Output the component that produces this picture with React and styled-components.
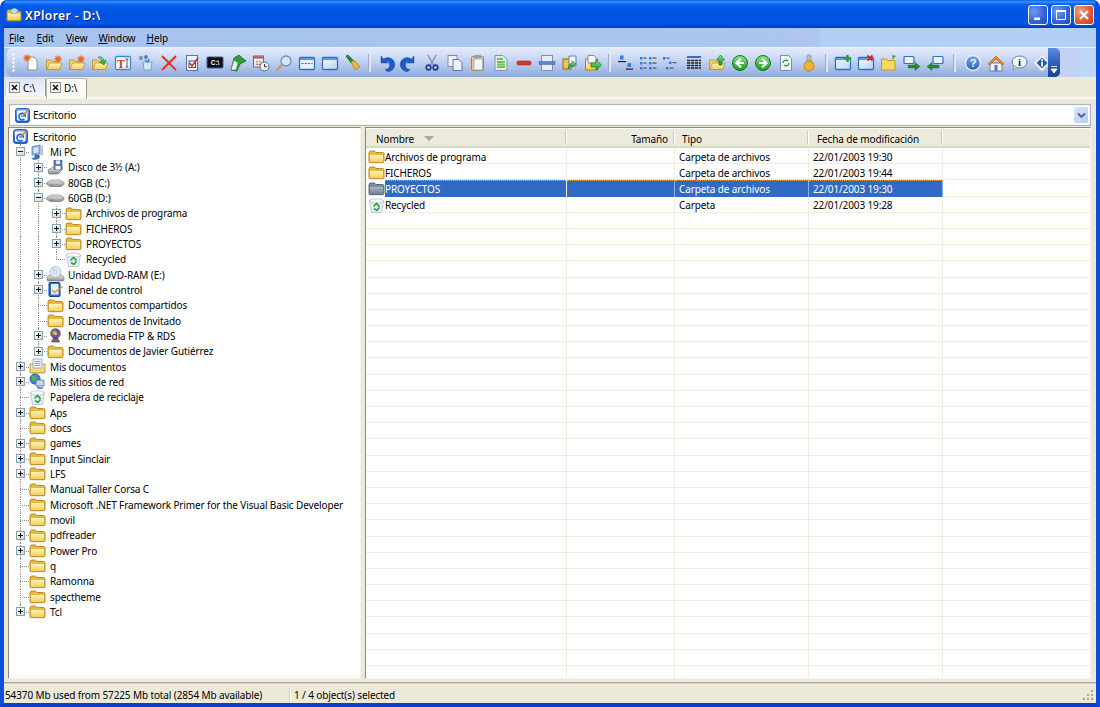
import React from 'react';
import styled, { createGlobalStyle } from 'styled-components';

const Global = createGlobalStyle`
  html, body { margin: 0; padding: 0; background: #fff; }
  body { font-family: "Noto Sans", "Open Sans", sans-serif; font-size: 10px; letter-spacing: -.12px; color: #000; }
  * { box-sizing: border-box; }
`;

const Frame = styled.div`
  width: 1100px; height: 707px; display: flex; flex-direction: column; overflow: hidden;
  border-radius: 7px 7px 0 0; background: #0a53dd;
  border: solid #0a50dc; border-width: 0 4px 4px; border-bottom-color: #0a3fd0;
`;
const TitleBar = styled.div`
  height: 28px; margin: 0 -4px; padding: 2px 6px 0 6px; flex: none; display: flex; align-items: center; gap: 3px;
  background: linear-gradient(180deg, #0a5fe8 0, #3d95ff 2px, #0a62ee 4px, #0058e6 9px, #0054e3 16px, #0058e8 23px, #0148d2 26px, #003bb0 28px);
`;
const TitleText = styled.span`
  flex: 1; color: #fff; font-size: 12.2px; font-weight: 600; letter-spacing: .35px; text-shadow: 1px 1px #0f1089;
`;
const WinBtn = styled.button`
  width: 20px; height: 20px; padding: 0; margin-top: -1px; border: 1px solid #fff; border-radius: 3px;
  display: flex; align-items: center; justify-content: center;
  background: ${p => p.$close
    ? 'radial-gradient(circle at 30% 30%, #f0a080, #dc5a34 60%, #c23a17)'
    : 'radial-gradient(circle at 30% 30%, #6f9cf0, #2f62d8 60%, #1f4dc4)'};
`;
const MenuBar = styled.div`
  height: 19px; flex: none; display: flex; align-items: center; padding-left: 5px;
  background: linear-gradient(90deg, #a7c3f0 0, #a9c4f1 740px, #afc5f2 815px, #b2d0f6 816px, #b2d0f6 100%);
`;
const MenuItem = styled.span`
  margin-right: ${p => p.$gap}px;
  &::first-letter { text-decoration: underline; }
`;
const ToolBand = styled.div`
  height: 30px; flex: none; display: flex; border-top: 1px solid #edf3fd; padding-left: 3px;
  background: linear-gradient(90deg, #b0c8f0 0, #c3d1f7 1060px, #c3d1f7 1074px, #bfd8f8 1075px);
`;
const ToolBar = styled.div`
  width: 1053px; height: 29px; display: flex; align-items: center; padding-left: 1px; position: relative;
  border-radius: 5px;
  background: linear-gradient(180deg, #e3ebfb 0, #cfdcf6 30%, #b4c8ee 60%, #8fa9db 100%);
`;
const Grip = styled.div`
  width: 7.5px; height: 19px; margin: 0 0 0 4px; flex: none;
  background: radial-gradient(circle at 1.5px 1.5px, #fff 1px, transparent 1.3px) 0 0 / 3px 4px repeat-y,
    radial-gradient(circle at 1.5px 1.5px, #6f86b5 .9px, transparent 1.2px) 0 0 / 3px 4px repeat-y;
`;
const ToolIcon = styled.span`
  width: 23px; height: 23px; flex: none; display: flex; align-items: center; justify-content: center;
`;
const ToolSep = styled.span`
  width: ${p => p.$w}px; height: 100%; flex: none; display: flex; justify-content: center; align-items: center;
  &::before { content: ''; width: 2px; height: 18px; background: #dfe6f4; border-left: 1px solid #97a9cf; }
`;
const Chevron = styled.div`
  position: absolute; right: 0; top: 0; bottom: 0; width: 12px; border-radius: 0 5px 5px 0;
  display: flex; align-items: flex-end; justify-content: center; padding-bottom: 3px;
  background: linear-gradient(180deg, #5e8ce0 0, #2f5fbd 50%, #1c418f 100%);
`;
const Tabs = styled.div`
  height: 22px; flex: none; display: flex; align-items: flex-start; padding: 1px 0 0 1px; background: #ece9d8;
  border-bottom: 1px solid #fbfaf3; box-shadow: inset 0 -2px #f4f2e6;
`;
const Tab = styled.div`
  width: 41px; height: ${p => p.$active ? 21 : 18}px; display: flex; align-items: center; gap: 3px; padding: 0 0 ${p => p.$active ? 3 : 0}px 3px;
  background: ${p => p.$active ? 'linear-gradient(180deg,#fdfdfb,#f8f7f0)' : 'linear-gradient(180deg,#dfe6f6,#f4f6fb)'};
  border: 1px solid ${p => p.$active ? '#b9b7a8' : '#cfd6e6'}; border-bottom: 0;
  border-right-color: #9d9b8e; border-radius: 2px 2px 0 0;
`;
const TabX = styled.span`
  width: 11px; height: 11px; flex: none; border: 1px solid #8a8a86; background: #f4f4ee; display: flex; align-items: center; justify-content: center;
`;
const AddressWrap = styled.div`
  height: 28px; flex: none; padding: 5px 5px 1px 5px; background: #ece9d8;
`;
const Address = styled.div`
  height: 22px; display: flex; align-items: center; gap: 1px; padding: 0 2px 0 4px; background: #fff;
  border: 1px solid #a7b5c6; box-shadow: inset 0 0 0 1px #f2f5fa;
`;
const AddressText = styled.span`flex: 1; margin-left: 1px;`;
const Drop = styled.span`
  width: 14px; height: 16px; display: flex; align-items: center; justify-content: center; border-radius: 2px;
  background: linear-gradient(135deg, #dbe5f9, #b7cbf2);
`;
const Main = styled.div`
  flex: 1; min-height: 0; display: flex; padding: 0 5px 3px 4px; background: #ece9d8;
  border-bottom: 1px solid #aca899;
`;
const TreePane = styled.div`
  width: 353px; overflow: hidden; background: #fff; padding: 1px 0 0 2px;
  border: 1px solid #8d8a7c; border-right-color: #f4f3ea; border-bottom-color: #f4f3ea;
  box-shadow: inset 0 -2px #f8f7f0;
`;
const TreeRow = styled.div`
  height: 15.33px; display: flex; align-items: center; padding-left: ${p => p.$root ? 1 : 0}px; white-space: nowrap;
`;
const Guide = styled.span`
  width: 18px; height: 100%; flex: none; position: relative;
  &::before { content: ''; position: absolute; left: 9px; top: 0; bottom: 0; border-left: 1px dotted #8f8f8f; }
`;
const Expander = styled.span`
  width: 18px; height: 100%; flex: none; position: relative; display: flex; align-items: center; justify-content: center;
  &::before { content: ''; position: absolute; left: 9px; top: 0; height: ${p => p.$last ? '50%' : '100%'}; border-left: 1px dotted #8f8f8f; }
  &::after { content: ''; position: absolute; left: 9px; right: 0; top: 50%; border-top: 1px dotted #8f8f8f; }
`;
const PlusBox = styled.span`
  width: 9px; height: 9px; position: relative; z-index: 1; margin-left: 1px; border: 1px solid #84a0b8;
  background: linear-gradient(135deg, #fff, #d8d8cc);
  &::before { content: ''; position: absolute; left: 1px; right: 1px; top: 3px; height: 1px; background: #111; }
  &::after { content: ''; display: ${p => p.$open ? 'none' : 'block'}; position: absolute; top: 1px; bottom: 1px; left: 3px; width: 1px; background: #111; }
`;
const TreeLabel = styled.span`margin-left: 4px;`;
const Splitter = styled.div`width: 3px; flex: none;`;
const ListPane = styled.div`
  flex: 1; min-width: 0; overflow: hidden; background: #fff; display: flex; flex-direction: column;
  border: 1px solid #8d8a7c; border-right-color: #f4f3ea; border-bottom-color: #f4f3ea; margin-left: 1px;
`;
const ListHead = styled.div`
  height: 20px; flex: none; display: grid; grid-template-columns: 200px 108px 134px 134px 1fr; padding-top: 3px;
  background: #ebeadb; border-bottom: 2px solid #d9d6c4; box-shadow: inset 0 1px #fff;
`;
const HeadCell = styled.div`
  display: flex; align-items: center; gap: 10px; padding: 0 6px 0 ${p => p.$pad || 0}px;
  justify-content: ${p => p.$right ? 'flex-end' : 'flex-start'}; position: relative;
  &::after { content: ''; position: absolute; right: 0; top: 0; bottom: 2px; width: 1px; background: #c9c7b6; box-shadow: 1px 0 #fff; display: ${p => p.$last ? 'none' : 'block'}; }
`;
const SortMark = styled.span`
  width: 0; height: 0; border: 5px solid transparent; border-top: 5px solid #aca899; border-bottom: 0;
`;
const ListRow = styled.div`
  height: 16.2px; flex: none; display: grid; grid-template-columns: 201px 108px 134px 134px 1fr;
  border-bottom: 1px solid #f0eddf;
`;
const ListCell = styled.div`
  display: flex; align-items: center; padding-left: ${p => p.$pad || 0}px; border-right: 1px solid ${p => p.$end ? 'transparent' : '#f0eddf'};
  white-space: nowrap;
  ${p => p.$sel ? 'background:#316ac5;color:#fff;border-top:1px dotted #e6a54a;border-right-color:#8fb0e4;' : ''}
`;
const NameIcon = styled.span`width: 17px; flex: none; display: flex; align-items: center; background: #fff;`;
const NameCell = styled.div`
  display: flex; align-items: stretch; padding-left: 2px; border-right: 1px solid #f0eddf;
`;
const NameText = styled.span`
  flex: 1; display: flex; align-items: center;
  ${p => p.$sel ? 'background:#316ac5;color:#fff;border-top:1px dotted #e6a54a;' : ''}
`;
const StatusBar = styled.div`
  height: 20px; flex: none; display: flex; align-items: center; background: #ece9d8; position: relative; padding: 3px 0 0 1px;
  box-shadow: inset 0 1px #d8d5c4;
`;
const StatusCell = styled.span`width: ${p => p.$w ? `${p.$w}px` : 'auto'}; flex: none; white-space: nowrap; padding-right: 2px;`;
const StatusSep = styled.span`width: 2px; height: 14px; margin-right: 3px; background: #d6d3c2; border-right: 1px solid #fff; flex: none;`;
const ResizeGrip = styled.div`
  position: absolute; right: 2px; bottom: 1px; width: 12px; height: 12px;
  background: linear-gradient(#aca899,#aca899) 9px 0/2px 2px no-repeat, linear-gradient(#aca899,#aca899) 9px 4px/2px 2px no-repeat,
   linear-gradient(#aca899,#aca899) 9px 8px/2px 2px no-repeat, linear-gradient(#aca899,#aca899) 5px 4px/2px 2px no-repeat,
   linear-gradient(#aca899,#aca899) 5px 8px/2px 2px no-repeat, linear-gradient(#aca899,#aca899) 1px 8px/2px 2px no-repeat;
`;
const DefsSvg = styled.svg`position: absolute; width: 0; height: 0;`;
const Glyph = styled.svg`display: block; flex: none; overflow: visible;`;

const Ico = ({ s = 18, vb = 18, children }) => <Glyph width={s} height={s} viewBox={`0 0 ${vb} ${vb}`}>{children}</Glyph>;

const Defs = () => (
  <DefsSvg>
    <defs>
      <linearGradient id="fy" x1="0" y1="0" x2="0" y2="1"><stop offset="0" stopColor="#fff6b8" /><stop offset="1" stopColor="#f4cc58" /></linearGradient>
      <linearGradient id="fd" x1="0" y1="0" x2="0" y2="1"><stop offset="0" stopColor="#aab6c2" /><stop offset="1" stopColor="#6f8296" /></linearGradient>
      <linearGradient id="gb" x1="0" y1="0" x2="0" y2="1"><stop offset="0" stopColor="#8de08d" /><stop offset="1" stopColor="#169a1e" /></linearGradient>
      <linearGradient id="bl" x1="0" y1="0" x2="0" y2="1"><stop offset="0" stopColor="#7aa8ea" /><stop offset="1" stopColor="#1f5fc4" /></linearGradient>
      <linearGradient id="hd" x1="0" y1="0" x2="0" y2="1"><stop offset="0" stopColor="#e8e8e8" /><stop offset="1" stopColor="#8b8b8b" /></linearGradient>
      <linearGradient id="wf" x1="0" y1="0" x2="1" y2="1"><stop offset="0" stopColor="#f8fbff" /><stop offset="1" stopColor="#b7d2f4" /></linearGradient>
    </defs>
  </DefsSvg>
);

const FolderBody = ({ dim }) => (
  <g>
    <path d="M1 5q0-2 2-2h3.500l1.500 1.500h6.500q1.500 0 1.500 1.500v7.500q0 1.200-1.200 1.200H2.200Q1 14.700 1 13.500Z" fill={dim ? '#7f8e9e' : '#e9b840'} stroke={dim ? '#4e5d6e' : '#b0821c'} strokeWidth=".9" />
    <path d="M2 7h13v6.500q0 .5-.5.5h-12q-.5 0-.5-.5Z" fill={dim ? 'url(#fd)' : 'url(#fy)'} />
  </g>
);
const Folder = ({ dim }) => <Ico s={17} vb={17}><FolderBody dim={dim} /></Ico>;

const Recycle = () => (
  <Ico s={17} vb={17}>
    <path d="M1.500 4l2 11.500h10L15.500 4Z" fill="#e6eef6" stroke="#a8b6c4" strokeWidth=".7" />
    <ellipse cx="8.500" cy="4" rx="7" ry="2.200" fill="#f6f9fc" stroke="#a8b6c4" strokeWidth=".7" />
    <path d="M5.500 9.500l3-3 2.500 2.500-1 .5M11.500 10.500l-2.500 3-3-2" fill="none" stroke="#2aa63a" strokeWidth="1.600" />
  </Ico>
);
const Desktop = () => (
  <Ico s={17} vb={17}>
    <rect x="1.500" y="1.500" width="14" height="14" rx="2.500" fill="url(#bl)" stroke="#2a5fc0" />
    <path d="M3.500 4h9.500v9H3.500Z" fill="#e8f2ff" stroke="#fff" />
    <path d="M11.500 9.500a3.300 3.300 0 1 0-1 2.500" fill="none" stroke="#1a5fd0" strokeWidth="1.500" />
    <path d="M7 9h4.500" stroke="#1a5fd0" strokeWidth="1.200" />
    <path d="M9 7l5-4.500.5 1L10.500 8Z" fill="#e8a83a" stroke="#7a5a10" strokeWidth=".4" />
  </Ico>
);
const Pc = () => (
  <Ico s={17} vb={17}>
    <path d="M3 2.500l8-1.500v9l-8 1Z" fill="#7fb0ec" stroke="#5c7fae" strokeWidth=".7" />
    <path d="M4.500 4l5-1v5.500l-5 .6Z" fill="#cfe6fb" />
    <path d="M11 1l2.500 1.500v9L11 10Z" fill="#c3cfdc" stroke="#8a9bb0" strokeWidth=".5" />
    <path d="M6 11v2.500l-3 1 1 1 5-.5 1.500-1.500-.5-2.500Z" fill="#3b6fc0" stroke="#24508f" strokeWidth=".5" />
  </Ico>
);
const Floppy = () => (
  <Ico s={17} vb={17}>
    <path d="M1 11l5-3h9v3l-4 4H2Z" fill="url(#hd)" stroke="#666" strokeWidth=".6" />
    <rect x="7" y="1.500" width="8" height="9" fill="#5f7fb8" stroke="#2f4b80" strokeWidth=".6" />
    <rect x="9" y="1.500" width="4" height="3.500" fill="#e8ecf4" />
    <rect x="8.500" y="7" width="5" height="3.500" fill="#fff" />
  </Ico>
);
const Hdd = () => (
  <Ico s={17} vb={17}>
    <path d="M0 8.500l4-2.500h9l4 2.500v2l-3 2H3l-3-2Z" fill="url(#hd)" stroke="#6e6e6e" strokeWidth=".6" />
    <ellipse cx="8.500" cy="8" rx="6.500" ry="1.800" fill="#c8c8c8" />
    <rect x="3.500" y="10.500" width="3" height="1" fill="#3bb54a" />
  </Ico>
);
const Dvd = () => (
  <Ico s={17} vb={17}>
    <path d="M0 11l3-2h11l3 2v3l-1 1H1l-1-1Z" fill="url(#hd)" stroke="#777" strokeWidth=".6" />
    <circle cx="8.500" cy="6" r="5.500" fill="#dfe8f4" stroke="#8d9db8" strokeWidth=".6" />
    <circle cx="8.500" cy="6" r="1.500" fill="#fff" stroke="#8d9db8" strokeWidth=".5" />
    <path d="M5 3.500l3 2-1.500-4Z" fill="#a8c8f0" />
  </Ico>
);
const Panel = () => (
  <Ico s={17} vb={17}>
    <rect x="2" y="1.500" width="11" height="14" rx="1" fill="#2f6fd0" stroke="#1c3f8c" />
    <rect x="4" y="3" width="7.500" height="10.500" fill="#e6f0fc" />
    <path d="M5 9l2.500 2.500 8-6" fill="none" stroke="#e39a26" strokeWidth="1.500" />
  </Ico>
);
const Globe = () => (
  <Ico s={17} vb={17}>
    <circle cx="8.500" cy="6.500" r="4.800" fill="#7e4fa8" stroke="#40245f" strokeWidth=".6" />
    <path d="M5 4.500q3-2 4 0t-1 3-3-1Z" fill="#64c24e" />
    <circle cx="8.500" cy="6.500" r="1.500" fill="#f3d24c" />
    <path d="M6.500 11l-2 4h8l-2-4Z" fill="#6b6b6b" stroke="#222" strokeWidth=".5" />
  </Ico>
);
const DocFolder = () => (
  <Ico s={17} vb={17}>
    <path d="M1 6h15v8q0 1-1 1H2q-1 0-1-1Z" fill="url(#fy)" stroke="#b0821c" strokeWidth=".8" />
    <rect x="4" y="1" width="9" height="9" fill="#f4f8fe" stroke="#7d92b8" strokeWidth=".7" />
    <path d="M5.500 3.500h6M5.500 5.500h6M5.500 7.500h6" stroke="#5f88c8" strokeWidth=".8" />
  </Ico>
);
const Network = () => (
  <Ico s={17} vb={17}>
    <circle cx="6" cy="6" r="5.200" fill="#3d7fdc" stroke="#1a4a9c" strokeWidth=".6" />
    <path d="M2.500 4q2-2 4-.5t0 3.500-3 .5Z" fill="#57b84a" />
    <rect x="7" y="7" width="8" height="6" fill="#bcd6f6" stroke="#567" strokeWidth=".7" />
    <path d="M9 13v2h5" fill="none" stroke="#4a6fa8" strokeWidth="1.300" />
  </Ico>
);
const treeIcons = { folder: <Folder />, recycle: <Recycle />, desktop: <Desktop />, pc: <Pc />, floppy: <Floppy />, hdd: <Hdd />, dvd: <Dvd />, panel: <Panel />, globe: <Globe />, docs: <DocFolder />, net: <Network /> };

const Star = ({ x = 0, y = 0 }) => <g transform={`translate(${x} ${y})`}><path d="M0-3.500v7M-3.500 0h7M-2.500-2.500l5 5M-2.500 2.500l5-5" stroke="#f06a1e" strokeWidth="1.300" /></g>;
const OpenFolder = () => (
  <g>
    <path d="M1.500 15.500V6h5l1.500 1.500h5.500v2h2.500l-2 6Z" fill="#f0d068" stroke="#b8922c" strokeWidth=".8" />
    <path d="M2 15.500l2.500-6.500H17l-2.500 6.500Z" fill="url(#fy)" stroke="#b8922c" strokeWidth=".8" />
  </g>
);
const WinShape = ({ fill = 'url(#wf)' }) => (
  <g>
    <rect x="1.500" y="3.500" width="15" height="12" rx="1" fill={fill} stroke="#2f6fc8" strokeWidth="1.300" />
    <rect x="2" y="4" width="14" height="2" fill="#5c98e0" />
  </g>
);
const GreenCircle = ({ dir }) => (
  <g>
    <circle cx="9" cy="9" r="7.500" fill="url(#gb)" stroke="#0f7a18" />
    <path d={dir < 0 ? 'M10 4.500L5.500 9l4.500 4.500M5.500 9H13' : 'M8 4.500L12.500 9 8 13.500M12.500 9H5'} fill="none" stroke="#fff" strokeWidth="2.200" />
  </g>
);
const Dashes = ({ rows }) => rows.map(([x, y, w], i) => (
  <g key={i}>
    <rect x={x} y={y} width="2.500" height="2.500" fill="#2f7de0" />
    <rect x={x + 3.500} y={y + .5} width={w} height="1.200" fill="#555" />
  </g>
));

const tools = {
  newfile: <><path d="M6 3h6l3 3v10H6Z" fill="#fbfcfe" stroke="#8a8fa8" /><Star x={5} y={4} /></>,
  folderstar: <><OpenFolder /><Star x={13} y={5} /></>,
  folderarrow: <><OpenFolder /><path d="M7 3q5-1 6 4l2-1-2 5-4-3 2-.5q-1-3-4-4.500Z" fill="url(#gb)" stroke="#137a1c" strokeWidth=".6" /></>,
  tbox: <><rect x="1.500" y="2.500" width="15" height="13" rx="1.500" fill="#f6fafe" stroke="#3d86d8" strokeWidth="1.300" /><text x="7" y="13.500" fontFamily="Liberation Serif, serif" fontWeight="700" fontSize="12" fill="#d8401c" textAnchor="middle">T</text><path d="M13 5v8M11.500 5h3M11.500 13h3" stroke="#333" strokeWidth=".8" /></>,
  recycleg: <><path d="M6 8l1 8h7l1-8Z" fill="#d5e6f8" stroke="#5a8fd0" strokeWidth=".8" /><circle cx="4" cy="4" r="2.200" fill="#7d96b5" /><circle cx="9" cy="3" r="2" fill="#5d7ea5" /><path d="M8 6l3 2 1-3" fill="none" stroke="#2c7fc8" strokeWidth="1.300" /></>,
  redx: <path d="M2 2l14 14M16 2L2 16" stroke="#e33118" strokeWidth="1.900" />,
  check: <><rect x="3.500" y="1.500" width="11" height="15" fill="#eef2fb" stroke="#5c6fa8" /><rect x="6" y="7" width="6.500" height="6.500" fill="#fff" stroke="#3558a8" /><path d="M6.500 9l2.500 3 6-8" fill="none" stroke="#d8281c" strokeWidth="1.600" /></>,
  console: <><rect x="1" y="3" width="16" height="11" rx="1" fill="#0a0a12" stroke="#3c5a9c" /><text x="9" y="11" fontFamily="Liberation Sans, sans-serif" fontWeight="700" fontSize="6.500" fill="#fff" textAnchor="middle">C:\</text></>,
  book: <><path d="M2 16L5 4l5-3 7 6-6 3-3 7Z" fill="#2e9d3c" stroke="#115a1c" strokeWidth=".7" /><path d="M2 16L5 6l4 3-2 7Z" fill="#e8f4e8" stroke="#5a7a60" strokeWidth=".6" /></>,
  calendar: <><rect x="1.500" y="2" width="10" height="11" fill="#f4f0f4" stroke="#8d5a6d" /><rect x="2" y="2.500" width="9" height="2" fill="#b84a4a" /><text x="6.500" y="11" fontFamily="Liberation Sans, sans-serif" fontSize="6" fill="#933" textAnchor="middle">12</text><circle cx="12.500" cy="12.500" r="4.500" fill="#eaeef6" stroke="#5f6f90" /><path d="M12.500 10v2.700h2.300" fill="none" stroke="#333" /></>,
  search: <><circle cx="11" cy="7" r="5" fill="#d6e6fa" stroke="#6d8fc0" strokeWidth="1.300" /><path d="M7 11l-5.500 5.500" stroke="#d8982c" strokeWidth="2.300" /></>,
  windash: <><WinShape fill="#e9f1fc" /><path d="M3.500 9.500h11" stroke="#2f6fc8" strokeDasharray="2 1.300" /></>,
  win: <WinShape />,
  broom: <><path d="M2 2l2-1 6 6-3 2Z" fill="#1f8f34" stroke="#0d5a1c" strokeWidth=".6" /><path d="M7 8l3-2 6 7-5 3Z" fill="#ecb63c" stroke="#a07a1c" strokeWidth=".7" /></>,
  undo: <path d="M4 2v7h7L8.500 6.800A4.200 4.200 0 1 1 8 15.500l2 2A7 7 0 1 0 6.500 5Z" fill="#1c5cc8" stroke="#0f3d8f" strokeWidth=".4" />,
  redo: <path d="M14 2v7H7l2.500-2.200A4.200 4.200 0 1 0 10 15.500l-2 2A7 7 0 1 1 11.500 5Z" fill="#1c5cc8" stroke="#0f3d8f" strokeWidth=".4" />,
  cut: <><path d="M5 1l5.500 10M13 1L7.500 11" stroke="#8a8f9c" strokeWidth="1.400" /><circle cx="5.500" cy="13.500" r="2.300" fill="none" stroke="#2138a8" strokeWidth="1.700" /><circle cx="12.500" cy="13.500" r="2.300" fill="none" stroke="#2138a8" strokeWidth="1.700" /></>,
  copy: <><rect x="2" y="1.500" width="9" height="11" fill="#f2f4fb" stroke="#8187a8" /><path d="M7 5.500h6l3 3v8H7Z" fill="#eef2fb" stroke="#6b729c" /></>,
  paste: <><rect x="2.500" y="2.500" width="12" height="14" rx="1" fill="#f0c97a" stroke="#b08634" /><rect x="5" y="1" width="7" height="3" fill="#9a9ea8" /><rect x="5" y="5" width="8.500" height="11" fill="#f0f6fe" stroke="#8aa0c8" strokeWidth=".7" /></>,
  greendoc: <><path d="M3 1.500h8l4 4v11H3Z" fill="#e4e9f2" stroke="#8891ac" /><path d="M5 5h6M5 8h8M5 10.500h8M5 13h8" stroke="#6cc851" strokeWidth="1.800" /></>,
  minus: <rect x="2" y="7" width="14" height="4" rx="1.200" fill="#d83a22" stroke="#a7331f" strokeWidth=".6" />,
  split: <><rect x="3.500" y="1.500" width="11" height="15" fill="#e8eef9" stroke="#7d8db0" /><rect x="1" y="7.500" width="16" height="3" fill="#5b86c8" stroke="#3a63a8" strokeWidth=".5" /></>,
  foldercopy: <><rect x="2" y="5" width="8" height="10" fill="#f0c64e" stroke="#8a6a20" /><path d="M8 2h7v10H8Z" fill="#eef3fb" stroke="#6d7da8" /><path d="M7 15q0-5 4-6V7l4 3-4 3v-2q-2 1-4 4Z" fill="url(#gb)" stroke="#137a1c" strokeWidth=".6" /></>,
  folderdoc: <><rect x="1.500" y="5" width="12" height="11" fill="url(#fy)" stroke="#a8801c" /><path d="M4 1.500h6l2 2V9H4Z" fill="#f6f8fc" stroke="#7d8db0" /><path d="M7 9h5V6l5.500 5-5.500 5v-3H7Z" fill="url(#gb)" stroke="#137a1c" strokeWidth=".7" /></>,
  large: <><rect x="4" y="1.500" width="3.500" height="4" fill="#2f7de0" /><rect x="2" y="7" width="8" height="1.200" fill="#222" /><rect x="11.500" y="9" width="3.500" height="4" fill="#2f7de0" /><rect x="10" y="14.500" width="7" height="1.200" fill="#222" /></>,
  small: <Dashes rows={[[1, 3, 3], [10, 3, 4], [1, 8, 3], [10, 8, 4], [1, 13, 3], [10, 13, 4]]} />,
  list: <Dashes rows={[[1, 3, 3], [7, 7.500, 4], [4, 13, 4]]} />,
  details: <><rect x="2" y="2" width="14" height="2" fill="#3c6fc0" /><path d="M2 6.500h14M2 9h14M2 11.500h14M2 14h14" stroke="#222" strokeWidth="1.300" strokeDasharray="3.300 .7" /></>,
  folderup: <><OpenFolder /><path d="M11 11V6H8.500L12.500 1l4 5H14v5Z" fill="url(#gb)" stroke="#137a1c" strokeWidth=".7" /></>,
  left: <GreenCircle dir={-1} />,
  right: <GreenCircle dir={1} />,
  refresh: <><path d="M3.500 1.500h8l3 3v12h-11Z" fill="#eef2fa" stroke="#7d8db0" /><path d="M6 9a3 3 0 0 1 5-2M12 9a3 3 0 0 1-5 2" fill="none" stroke="#2ca33a" strokeWidth="1.400" /></>,
  knob: <><rect x="7" y="1" width="4" height="9" rx="1.500" fill="#b8bcc4" stroke="#777" strokeWidth=".6" /><circle cx="9" cy="12" r="5" fill="#eeb23a" stroke="#b98214" /><circle cx="4.500" cy="12" r="1.500" fill="#e6a52e" /><circle cx="13.500" cy="12" r="1.500" fill="#e6a52e" /></>,
  winplus: <><WinShape /><path d="M13.500 1v7M10 4.500h7" stroke="#2d9a3c" strokeWidth="2.300" /></>,
  winx: <><WinShape /><path d="M10.500 1.500l5 5M15.500 1.500l-5 5" stroke="#cf2a20" strokeWidth="2" /></>,
  folderback: <><path d="M1.500 5h5l1.500 1.500h7v9.500H1.500Z" fill="#f4d860" stroke="#c69b25" /><path d="M13 5V2l2.500.5" fill="none" stroke="#2d9a3c" strokeWidth="1.300" /></>,
  winright: <><rect x="1" y="2.500" width="10" height="7" rx="1" fill="#eaf1fb" stroke="#2f6fc8" strokeWidth="1.200" /><path d="M5 11h7V8.500l5 4-5 4V14H5Z" fill="#1e9030" stroke="#0f5a1c" strokeWidth=".4" /></>,
  winleft: <><rect x="7" y="2.500" width="10" height="7" rx="1" fill="#eaf1fb" stroke="#2f6fc8" strokeWidth="1.200" /><path d="M13 11H6V8.500l-5 4 5 4V14h7Z" fill="#1e9030" stroke="#0f5a1c" strokeWidth=".4" /></>,
  help: <><circle cx="9" cy="9" r="7.500" fill="url(#bl)" stroke="#e8eefa" strokeWidth="1.500" /><text x="9" y="13" fontFamily="Liberation Sans, sans-serif" fontWeight="700" fontSize="11" fill="#fff" textAnchor="middle">?</text></>,
  home: <><path d="M3 9v8h12V9Z" fill="#eef2f8" stroke="#6f7f9c" /><path d="M1 10l8-8 8 8-2 1-6-6-6 6Z" fill="#ef8a2c" stroke="#b05c14" strokeWidth=".6" /><rect x="7.500" y="11" width="3" height="6" fill="#4f78b8" /></>,
  infobubble: <><ellipse cx="9.500" cy="8" rx="7.500" ry="6" fill="#f4f7fc" stroke="#5f7fb0" /><path d="M4 12l-1 4 4-2.500Z" fill="#f4f7fc" stroke="#5f7fb0" strokeWidth=".7" /><text x="9.500" y="12" fontFamily="Liberation Serif, serif" fontWeight="700" fontSize="11" fill="#133" textAnchor="middle">i</text></>,
  infodiamond: <><path d="M9 1l8 8-8 8-8-8Z" fill="#f4f7fc" stroke="#dfe6f0" /><path d="M9 3.500L14.500 9 9 14.500 3.500 9Z" fill="#1f5ac0" /><rect x="8.200" y="5" width="1.800" height="1.800" fill="#fff" /><rect x="8.200" y="7.500" width="1.800" height="5" fill="#fff" /></>,
};

const toolbarGroups = [
  { sep: 0, items: ['newfile', 'folderstar', 'folderstar', 'folderarrow', 'tbox', 'recycleg', 'redx', 'check', 'console', 'book', 'calendar', 'search', 'windash', 'win', 'broom'] },
  { sep: 10, items: ['undo', 'redo', 'cut', 'copy', 'paste', 'greendoc', 'minus', 'split', 'foldercopy', 'folderdoc'] },
  { sep: 9, items: ['large', 'small', 'list', 'details', 'folderup', 'left', 'right', 'refresh', 'knob'] },
  { sep: 11, items: ['winplus', 'winx', 'folderback', 'winright', 'winleft'] },
  { sep: 15, items: ['help', 'home', 'infobubble', 'infodiamond'] },
];

const t = (level, i, label, box, guides, last) => ({ level, i, label, box, guides, last });
const g1 = [true], g2 = [true, true];
const rows = [
  t(0, 'pc', 'Mi PC', '-', []),
  t(1, 'floppy', 'Disco de 3½ (A:)', '+', g1),
  t(1, 'hdd', '80GB (C:)', '+', g1),
  t(1, 'hdd', '60GB (D:)', '-', g1),
  t(2, 'folder', 'Archivos de programa', '+', g2),
  t(2, 'folder', 'FICHEROS', '+', g2),
  t(2, 'folder', 'PROYECTOS', '+', g2),
  t(2, 'recycle', 'Recycled', null, g2, true),
  t(1, 'dvd', 'Unidad DVD-RAM (E:)', '+', g1),
  t(1, 'panel', 'Panel de control', '+', g1),
  t(1, 'folder', 'Documentos compartidos', null, g1),
  t(1, 'folder', 'Documentos de Invitado', null, g1),
  t(1, 'globe', 'Macromedia FTP & RDS', '+', g1),
  t(1, 'folder', 'Documentos de Javier Gutiérrez', '+', g1, true),
  t(0, 'docs', 'Mis documentos', '+', []),
  t(0, 'net', 'Mis sitios de red', '+', []),
  t(0, 'recycle', 'Papelera de reciclaje', null, []),
  t(0, 'folder', 'Aps', '+', []),
  t(0, 'folder', 'docs', null, []),
  t(0, 'folder', 'games', '+', []),
  t(0, 'folder', 'Input Sinclair', '+', []),
  t(0, 'folder', 'LFS', '+', []),
  t(0, 'folder', 'Manual Taller Corsa C', null, []),
  t(0, 'folder', 'Microsoft .NET Framework Primer for the Visual Basic Developer', null, []),
  t(0, 'folder', 'movil', null, []),
  t(0, 'folder', 'pdfreader', '+', []),
  t(0, 'folder', 'Power Pro', '+', []),
  t(0, 'folder', 'q', null, []),
  t(0, 'folder', 'Ramonna', null, []),
  t(0, 'folder', 'spectheme', null, []),
  t(0, 'folder', 'Tcl', '+', [], true),
];

const files = [
  { name: 'Archivos de programa', type: 'Carpeta de archivos', date: '22/01/2003 19:30', icon: 'folder' },
  { name: 'FICHEROS', type: 'Carpeta de archivos', date: '22/01/2003 19:44', icon: 'folder' },
  { name: 'PROYECTOS', type: 'Carpeta de archivos', date: '22/01/2003 19:30', icon: 'folder', sel: true },
  { name: 'Recycled', type: 'Carpeta', date: '22/01/2003 19:28', icon: 'recycle' },
];

const menus = [['File', 12], ['Edit', 12], ['View', 11], ['Window', 11], ['Help', 0]];

const CloseX = () => (
  <Ico s={7} vb={7}><path d="M1 1l5 5M6 1L1 6" stroke="#111" strokeWidth="1.500" /></Ico>
);

export default function App() {
  return (
    <>
      <Global />
      <Defs />
      <Frame>
        <TitleBar>
          <Ico s={16} vb={17}>
            <FolderBody />
            <path d="M5 3l4-2 4 2-2 4H6Z" fill="#c8dcf8" stroke="#6a85b5" strokeWidth=".5" />
          </Ico>
          <TitleText>XPlorer - D:\</TitleText>
          <WinBtn>
            <Ico s={14} vb={14}><rect x="3" y="9.500" width="6" height="2.500" fill="#fff" /></Ico>
          </WinBtn>
          <WinBtn>
            <Ico s={14} vb={14}><path d="M2.500 2.500h9v9h-9Z" fill="none" stroke="#fff" /><rect x="2" y="2" width="10" height="2" fill="#fff" /></Ico>
          </WinBtn>
          <WinBtn $close>
            <Ico s={14} vb={14}><path d="M3 3l8 8M11 3l-8 8" stroke="#fff" strokeWidth="2" /></Ico>
          </WinBtn>
        </TitleBar>
        <MenuBar>
          {menus.map(([m, gap]) => <MenuItem key={m} $gap={gap}>{m}</MenuItem>)}
        </MenuBar>
        <ToolBand>
          <ToolBar>
            <Grip />
            {toolbarGroups.map((group, gi) => (
              <React.Fragment key={gi}>
                {group.sep > 0 && <ToolSep $w={group.sep} />}
                {group.items.map((name, i) => (
                  <ToolIcon key={i}><Ico s={18} vb={18}>{tools[name]}</Ico></ToolIcon>
                ))}
              </React.Fragment>
            ))}
            <Chevron>
              <Ico s={8} vb={8}><path d="M1 .5h6M1 3h6L4 7Z" fill="#fff" stroke="#fff" strokeWidth=".8" /></Ico>
            </Chevron>
          </ToolBar>
        </ToolBand>
        <Tabs>
          <Tab><TabX><CloseX /></TabX>C:\</Tab>
          <Tab $active><TabX><CloseX /></TabX>D:\</Tab>
        </Tabs>
        <AddressWrap>
          <Address>
            <Desktop />
            <AddressText>Escritorio</AddressText>
            <Drop>
              <Ico s={9} vb={9}><path d="M1 2.500l3.500 3.500L8 2.500" fill="none" stroke="#4d6185" strokeWidth="1.800" /></Ico>
            </Drop>
          </Address>
        </AddressWrap>
        <Main>
          <TreePane>
            <TreeRow $root>
              <Desktop />
              <TreeLabel>Escritorio</TreeLabel>
            </TreeRow>
            {rows.map((r, idx) => (
              <TreeRow key={idx}>
                {r.guides.map((_, gi) => <Guide key={gi} />)}
                <Expander $last={r.last}>
                  {r.box && <PlusBox $open={r.box === '-'} />}
                </Expander>
                {treeIcons[r.i]}
                <TreeLabel>{r.label}</TreeLabel>
              </TreeRow>
            ))}
          </TreePane>
          <Splitter />
          <ListPane>
            <ListHead>
              <HeadCell $pad={10}>Nombre<SortMark /></HeadCell>
              <HeadCell $right>Tamaño</HeadCell>
              <HeadCell $pad={8}>Tipo</HeadCell>
              <HeadCell $pad={9}>Fecha de modificación</HeadCell>
              <HeadCell $last />
            </ListHead>
            {files.map(f => (
              <ListRow key={f.name}>
                <NameCell>
                  <NameIcon>{f.icon === 'folder' ? <Folder dim={f.sel} /> : <Recycle />}</NameIcon>
                  <NameText $sel={f.sel}>{f.name}</NameText>
                </NameCell>
                <ListCell $sel={f.sel} />
                <ListCell $sel={f.sel} $pad={4}>{f.type}</ListCell>
                <ListCell $sel={f.sel} $pad={4}>{f.date}</ListCell>
                <ListCell $end />
              </ListRow>
            ))}
            {Array.from({ length: 29 }, (_, i) => (
              <ListRow key={i}>
                <ListCell /><ListCell /><ListCell /><ListCell /><ListCell $end />
              </ListRow>
            ))}
          </ListPane>
        </Main>
        <StatusBar>
          <StatusCell $w={284}>54370 Mb used from 57225 Mb total (2854 Mb available)</StatusCell>
          <StatusSep />
          <StatusCell>1 / 4 object(s) selected</StatusCell>
          <ResizeGrip />
        </StatusBar>
      </Frame>
    </>
  );
}
